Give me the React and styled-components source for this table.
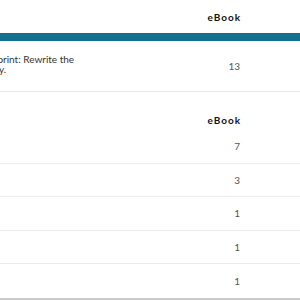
import { createGlobalStyle, styled } from "styled-components";

const GlobalStyle = createGlobalStyle`
  html, body {
    margin: 0;
    padding: 0;
    background: #fff;
  }
  body {
    font-family: Lato, "Open Sans", Arial, sans-serif;
    overflow: hidden;
    -webkit-font-smoothing: antialiased;
  }
`;

const Page = styled.div`
  width: 300px;
  height: 300px;
  overflow: hidden;
  background: #fff;
`;

const Row = styled.div`
  display: grid;
  grid-template-columns: 1fr 80px 60px;
  align-items: ${(p) => p.$align || "center"};
  box-sizing: border-box;
  height: ${(p) => p.$height}px;
  padding-bottom: ${(p) => p.$pb || 0}px;
  border-bottom: ${(p) => (p.$border ? `${p.$border}` : "none")};
`;

const HeadCell = styled.div`
  grid-column: 2;
  text-align: right;
  font-size: 10px;
  line-height: 14px;
  font-weight: 700;
  letter-spacing: 1px;
  margin-right: -1px;
  color: #0f1111;
`;

const Num = styled.div`
  grid-column: 2;
  text-align: right;
  font-size: 10px;
  line-height: 14px;
  color: #555;
`;

const Title = styled.div`
  grid-column: 1;
  margin-left: -68px;
  margin-top: -4px;
  font-size: 10px;
  line-height: 10px;
  color: #333;
  white-space: nowrap;
`;

const Bar = styled.div`
  height: 8px;
  background: #13708f;
`;

const Bottom = styled.div`
  height: 4px;
  border-top: 3px solid #c9c9c9;
`;

const counts = [7, 3, 1, 1, 1];

export default function App() {
  return (
    <Page>
      <GlobalStyle />
      <Row $height={33}>
        <HeadCell>eBook</HeadCell>
      </Row>
      <Bar />
      <Row $height={51} $border="1px solid #e7e7e7">
        <Title>
          The Habit Blueprint: Rewrite the
          <br />
          and Productivity.
        </Title>
        <Num>13</Num>
      </Row>
      <Row $height={38} $align="end" $pb={3}>
        <HeadCell>eBook</HeadCell>
      </Row>
      {counts.map((n, i) => (
        <Row
          key={i}
          $height={33.5}
          $border={i < counts.length - 1 ? "1px solid #ececec" : "none"}
        >
          <Num>{n}</Num>
        </Row>
      ))}
      <Bottom />
    </Page>
  );
}
